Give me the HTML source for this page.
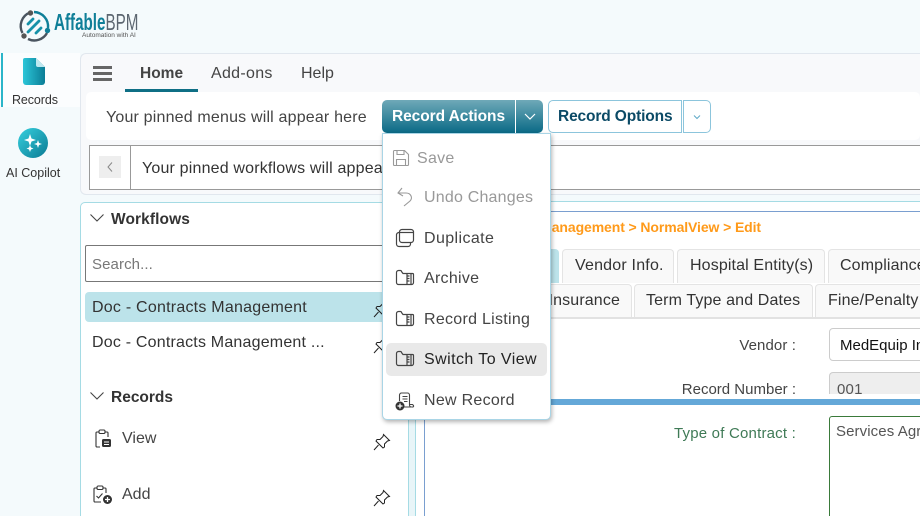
<!DOCTYPE html>
<html><head><meta charset="utf-8"><style>
html,body{margin:0;padding:0;width:920px;height:516px;overflow:hidden;background:#f4fafc;font-family:"Liberation Sans",sans-serif;color:#222}
#w{position:relative;width:920px;height:516px;overflow:hidden}
.a{position:absolute;box-sizing:border-box}
.t{position:absolute;white-space:nowrap;font-size:16px;line-height:20px}
.b{font-size:15.5px;font-weight:bold}
svg{position:absolute;overflow:visible}
.m{color:#444;font-size:16px;letter-spacing:.28px}
.d{color:#999}
.lb{position:absolute;right:124px;white-space:nowrap;font-size:15px;line-height:20px;color:#444;letter-spacing:.1px}
.tab{position:absolute;box-sizing:border-box;background:#f9f9f9;border:1px solid #e4e4e4;border-bottom:none;border-radius:4px 4px 0 0;height:34px}
.tab span{position:absolute;white-space:nowrap;font-size:16px;line-height:20px;top:6px;color:#333;letter-spacing:.13px}
</style></head><body><div id="w">
<div class="a" style="left:0;top:53px;width:80px;height:54px;background:#fbfdfe"></div>
<div class="a" style="left:1px;top:53px;width:2px;height:54px;background:#2bb5c9"></div>
<div class="a" style="left:80px;top:53px;width:840px;height:142px;background:#f8f9fb;border:1px solid #e1e7ee;border-right:none;border-radius:6px 0 0 6px"></div>

<!-- logo -->
<svg style="left:18px;top:9px" width="34" height="35" viewBox="0 0 34 35" fill="none">
<path d="M12 3.500A14.500 14.500 0 0 0 4.500 24" stroke="#4a5560" stroke-width="2.400"/>
<path d="M10 30A14.500 14.500 0 0 0 29 24" stroke="#4a5560" stroke-width="2.400"/>
<path d="M16 3A14.500 14.500 0 0 1 30 19" stroke="#0f7f98" stroke-width="2.400"/>
<circle cx="12.500" cy="4" r="2.700" fill="#555"/><circle cx="29.500" cy="21.500" r="2.700" fill="#0f7f98"/><circle cx="6" cy="27" r="2.700" fill="#555"/>
<path d="M10 15l5-5M10 23l11-11M18 24l5-5" stroke="#1591a8" stroke-width="2.800" stroke-linecap="round"/>
</svg>
<div class="t" style="left:54px;top:9px;font-size:23px;line-height:26px;font-weight:bold;color:#0f7f98;transform:scaleX(.66);transform-origin:0 0;letter-spacing:0">Affable<span style="font-weight:normal;color:#5c6670">BPM</span></div>
<div class="t" style="left:82px;top:31px;font-size:6.500px;line-height:10px;color:#555">Automation with AI</div>

<!-- sidebar -->
<svg style="left:23px;top:58px" width="22" height="27" viewBox="0 0 22 27"><defs><linearGradient id="g1" x1="0" x2="1" y1="0" y2="0"><stop offset="0" stop-color="#2cc6d8"/><stop offset="1" stop-color="#0b7d96"/></linearGradient><linearGradient id="g2" x1="0" x2="1" y1="0" y2="1"><stop offset="0" stop-color="#36d0de"/><stop offset="1" stop-color="#0a7a93"/></linearGradient></defs>
<path d="M2 0H13L22 9V24a3 3 0 0 1-3 3H3a3 3 0 0 1-3-3V2a2 2 0 0 1 2-2z" fill="url(#g1)"/><path d="M13 0L22 9H15a2 2 0 0 1-2-2z" fill="#bfe8f0"/></svg>
<div class="t" style="left:12px;top:90px;font-size:12.500px;color:#333;letter-spacing:-.1px">Records</div>
<svg style="left:18px;top:128px" width="30" height="30" viewBox="0 0 30 30"><circle cx="15" cy="15" r="15" fill="url(#g2)"/><path d="M12 6l1.500 4.500L18 12l-4.500 1.500L12 18l-1.500-4.500L6 12l4.500-1.500zM20 12l1 3 3 1-3 1-1 3-1-3-3-1 3-1zM12 17l1 2.500 2.500 1-2.500 1L12 24l-1-2.500-2.500-1 2.500-1z" fill="#fff"/></svg>
<div class="t" style="left:6px;top:163px;font-size:12.500px;color:#333">AI Copilot</div>

<!-- nav -->
<div class="a" style="left:93px;top:66px;width:19px;height:2.500px;background:#666"></div>
<div class="a" style="left:93px;top:72px;width:19px;height:2.500px;background:#666"></div>
<div class="a" style="left:93px;top:78px;width:19px;height:2.500px;background:#666"></div>
<div class="t b" style="left:140px;top:64px;color:#444">Home</div>
<div class="a" style="left:125px;top:89px;width:73px;height:3px;background:#0f6f85"></div>
<div class="t" style="left:211px;top:64px;color:#444;letter-spacing:.3px">Add-ons</div>
<div class="t" style="left:301px;top:64px;color:#444">Help</div>

<!-- pinned menus -->
<div class="a" style="left:86px;top:92px;width:834px;height:48px;background:#fff;border-radius:5px"></div>
<div class="t" style="left:106px;top:108px;color:#444;letter-spacing:.18px">Your pinned menus will appear here</div>
<div class="a" style="left:382px;top:100px;width:133px;height:33px;background:linear-gradient(#6fa9b8,#0a6a86);border-radius:5px 0 0 5px"></div>
<div class="t b" style="left:392px;top:107px;color:#fff;letter-spacing:-.07px">Record Actions</div>
<div class="a" style="left:516px;top:100px;width:27px;height:33px;background:linear-gradient(#6fa9b8,#0a6a86);border-radius:0 5px 5px 0"></div>
<svg style="left:524px;top:113px" width="12" height="8" fill="none"><path d="M1 1l5 5 5-5" stroke="#fff" stroke-width="1.200"/></svg>
<div class="a" style="left:548px;top:100px;width:134px;height:33px;background:#fff;border:1px solid #8cc5dc;border-radius:5px 0 0 5px"></div>
<div class="t b" style="left:558px;top:107px;color:#0b4a66;letter-spacing:-.13px">Record Options</div>
<div class="a" style="left:683px;top:100px;width:28px;height:33px;background:#fff;border:1px solid #8cc5dc;border-radius:0 5px 5px 0"></div>
<svg style="left:693px;top:115px" width="8" height="5" fill="none"><path d="M1 .5l3 3 3-3" stroke="#5fa9c7" stroke-width="1"/></svg>

<!-- pinned workflows -->
<div class="a" style="left:89px;top:145px;width:840px;height:45px;background:#fff;border:1px solid #999"></div>
<div class="a" style="left:130px;top:145px;width:1px;height:45px;background:#999"></div>
<div class="a" style="left:99px;top:156px;width:22px;height:22px;background:#eee"></div>
<svg style="left:107px;top:162px" width="6" height="10" fill="none"><path d="M5 .5L1 5l4 4.500" stroke="#888" stroke-width="1"/></svg>
<div class="t" style="left:142px;top:159px;color:#333;letter-spacing:.18px">Your pinned workflows will appear here</div>

<!-- left panel -->
<div class="a" style="left:80px;top:202px;width:329px;height:330px;background:#fff;border:1px solid #a5dbe4;border-radius:5px"></div>
<svg style="left:90px;top:214px" width="14" height="8" fill="none"><path d="M.5.5L7 7l6.500-6.500" stroke="#444" stroke-width="1.100"/></svg>
<div class="t b" style="left:111px;top:210px;color:#333;letter-spacing:.1px">Workflows</div>
<div class="a" style="left:85px;top:245px;width:320px;height:37px;background:#fff;border:1px solid #777;border-radius:2px"></div>
<div class="t" style="left:92px;top:255px;font-size:15px;color:#777;letter-spacing:.1px">Search...</div>
<div class="a" style="left:85px;top:292px;width:320px;height:30px;background:#bce3ea;border-radius:4px"></div>
<div class="t" style="left:92px;top:298px;color:#333;letter-spacing:.23px">Doc - Contracts Management</div>
<div class="t" style="left:92px;top:333px;color:#333;letter-spacing:.2px">Doc - Contracts Management ...</div>
<svg style="left:90px;top:392px" width="14" height="8" fill="none"><path d="M.5.5L7 7l6.500-6.500" stroke="#444" stroke-width="1.100"/></svg>
<div class="t b" style="left:111px;top:388px;color:#333">Records</div>

<svg style="left:95px;top:429px" width="18" height="20" viewBox="0 0 18 20" fill="none" stroke="#333" stroke-width="1.100"><path d="M4 3H2a1 1 0 0 0-1 1v13a1 1 0 0 0 1 1h3M10 3h2a1 1 0 0 1 1 1v4"/><rect x="4" y="1" width="6" height="3.500" rx="1.200"/><rect x="7" y="10" width="9" height="8" rx="1.500" fill="#333" stroke="none"/><path d="M9 13h5M9 15.500h5" stroke="#fff" stroke-width="1"/></svg>
<div class="t" style="left:122px;top:429px;color:#444">View</div>
<svg style="left:93px;top:485px" width="20" height="20" viewBox="0 0 20 20" fill="none" stroke="#333" stroke-width="1.100"><path d="M4 3H2a1 1 0 0 0-1 1v12a1 1 0 0 0 1 1h6M10 3h2a1 1 0 0 1 1 1v4"/><rect x="4" y="1" width="6" height="3.500" rx="1.200"/><path d="M3.500 11l2 2 4-4.500"/><circle cx="14.500" cy="14.500" r="4.500" fill="#333" stroke="none"/><path d="M12 14.500h5M14.500 12v5" stroke="#fff" stroke-width="1.300"/></svg>
<div class="t" style="left:122px;top:485px;color:#444">Add</div>
<svg style="left:373px;top:300px" width="18" height="18" viewBox="0 0 18 18" fill="none" stroke="#222" stroke-width="1"><path d="M1 17l4.500-5M10.500 1.500l6 6-2 .5-3 3 0 3-1.500 1-7-7 1-1.500h3l3-3z"/></svg>
<svg style="left:373px;top:336px" width="18" height="18" viewBox="0 0 18 18" fill="none" stroke="#222" stroke-width="1"><path d="M1 17l4.500-5M10.500 1.500l6 6-2 .5-3 3 0 3-1.500 1-7-7 1-1.500h3l3-3z"/></svg>
<svg style="left:373px;top:433px" width="18" height="18" viewBox="0 0 18 18" fill="none" stroke="#222" stroke-width="1"><path d="M1 17l4.500-5M10.500 1.500l6 6-2 .5-3 3 0 3-1.500 1-7-7 1-1.500h3l3-3z"/></svg>
<svg style="left:373px;top:489px" width="18" height="18" viewBox="0 0 18 18" fill="none" stroke="#222" stroke-width="1"><path d="M1 17l4.500-5M10.500 1.500l6 6-2 .5-3 3 0 3-1.500 1-7-7 1-1.500h3l3-3z"/></svg>

<!-- right panel -->
<div class="a" style="left:415px;top:201px;width:505px;height:315px;background:#fff;border-left:1px solid #a5dbe4;border-top:1px solid #a5dbe4"></div>
<div class="a" style="left:409px;top:202px;width:6px;height:314px;background:#e8f5f8"></div>
<div class="a" style="left:424px;top:211px;width:496px;height:305px;background:#fff;border-left:1px solid #7a9fd0;border-top:1px solid #7a9fd0"></div>
<div class="t" style="right:159px;top:217px;font-size:14px;font-weight:bold;color:#ff9a1a;letter-spacing:-.1px">Doc - Contracts Management &gt; NormalView &gt; Edit</div>
<div class="a" style="left:440px;top:249px;width:119px;height:34px;background:#bce3ea;border-radius:4px 4px 0 0"></div>
<div class="tab" style="left:562px;top:249px;width:112px"><span style="left:12px;letter-spacing:.2px">Vendor Info.</span></div>
<div class="tab" style="left:677px;top:249px;width:148px"><span style="left:12px">Hospital Entity(s)</span></div>
<div class="tab" style="left:828px;top:249px;width:120px"><span style="left:11px">Compliance</span></div>
<div class="tab" style="left:440px;top:284px;width:192px"><span style="right:11px">Insurance</span></div>
<div class="tab" style="left:634px;top:284px;width:179px"><span style="left:11px">Term Type and Dates</span></div>
<div class="tab" style="left:815px;top:284px;width:120px"><span style="left:12px">Fine/Penalty</span></div>
<div class="a" style="left:425px;top:317px;width:495px;height:2px;background:#e2e2e2"></div>

<div class="lb" style="top:336px">Vendor :</div>
<div class="a" style="left:829px;top:328px;width:110px;height:33px;background:#fff;border:1px solid #ccc;border-radius:4px"></div>
<div class="t" style="left:840px;top:336px;font-size:15px;color:#111;width:80px;overflow:hidden">MedEquip Inc</div>
<div class="lb" style="top:380px;letter-spacing:0">Record Number :</div>
<div class="a" style="left:829px;top:372px;width:110px;height:22px;background:#eee;border:1px solid #ccc;border-bottom:none;border-radius:4px 4px 0 0"></div>
<div class="t" style="left:837px;top:380px;font-size:15px;line-height:20px;color:#555;height:14px;overflow:hidden;letter-spacing:.2px">001</div>
<div class="a" style="left:425px;top:399px;width:495px;height:6px;background:#64a8d8"></div>
<div class="lb" style="top:424px;color:#3f7a56;letter-spacing:.2px">Type of Contract :</div>
<div class="a" style="left:829px;top:416px;width:110px;height:120px;background:#fff;border:1px solid #3a7a3a;border-radius:3px"></div>
<div class="t" style="left:836px;top:422px;font-size:15px;color:#555;letter-spacing:.1px;width:84px;overflow:hidden">Services Agreement</div>

<!-- dropdown -->
<div class="a" style="left:382px;top:133px;width:169px;height:287px;background:#fff;border:1px solid #a9d5e6;border-radius:0 0 5px 5px;box-shadow:1px 2px 4px rgba(0,0,0,.3)"></div>
<div class="a" style="left:386px;top:343px;width:161px;height:33px;background:#e9e9e9;border-radius:5px"></div>

<svg style="left:393px;top:150px" width="16" height="16" viewBox="0 0 16 16" fill="none" stroke="#999" stroke-width="1.100"><path d="M1.500.5h10l4 4v10a1 1 0 0 1-1 1h-13a1 1 0 0 1-1-1v-13a1 1 0 0 1 1-1z"/><path d="M4 .5v4h7v-4M3.500 15.500v-6h9v6"/></svg>
<div class="t m d" style="left:417px;top:149px">Save</div>
<svg style="left:397px;top:187px" width="17" height="20" viewBox="0 0 17 20" fill="none" stroke="#999" stroke-width="1.100"><path d="M5 1L1 6l5 3M1 6h8c5 0 7 5 4 8l-6 5"/></svg>
<div class="t m d" style="left:424px;top:188px;letter-spacing:.2px">Undo Changes</div>
<svg style="left:396px;top:229px" width="18" height="18" viewBox="0 0 18 18" fill="none" stroke="#444" stroke-width="1.200"><rect x="3.500" y=".5" width="14" height="13" rx="2.500"/><path d="M3.500 3.500H3A2.500 2.500 0 0 0 .5 6v9A2.500 2.500 0 0 0 3 17.500h9a2.500 2.500 0 0 0 2.500-2.500v-1.500"/><path d="M3.500 3.500h14"/></svg>
<div class="t m" style="left:424px;top:229px;letter-spacing:.4px">Duplicate</div>

<svg style="left:396px;top:270px" width="18" height="15" viewBox="0 0 18 15" fill="none" stroke="#444" stroke-width="1.200"><path d="M.5 3v9.500a2 2 0 0 0 2 2h13a2 2 0 0 0 2-2v-8a1 1 0 0 0-1-1H7l-1.500-2a1 1 0 0 0-1-1H2.500a2 2 0 0 0-2 2z"/><path d="M11 3.500v11M15 3.500v11M11 6h2.500M13.500 8.500H11M11 11h2.500"/></svg>
<div class="t m" style="left:424px;top:269px">Archive</div>
<svg style="left:396px;top:311px" width="18" height="15" viewBox="0 0 18 15" fill="none" stroke="#444" stroke-width="1.200"><path d="M.5 3v9.500a2 2 0 0 0 2 2h13a2 2 0 0 0 2-2v-8a1 1 0 0 0-1-1H7l-1.500-2a1 1 0 0 0-1-1H2.500a2 2 0 0 0-2 2z"/><path d="M11 3.500v11M15 3.500v11M11 6h2.500M13.500 8.500H11M11 11h2.500"/></svg>
<div class="t m" style="left:424px;top:310px">Record Listing</div>
<svg style="left:396px;top:351px" width="18" height="15" viewBox="0 0 18 15" fill="none" stroke="#444" stroke-width="1.200"><path d="M.5 3v9.500a2 2 0 0 0 2 2h13a2 2 0 0 0 2-2v-8a1 1 0 0 0-1-1H7l-1.500-2a1 1 0 0 0-1-1H2.500a2 2 0 0 0-2 2z"/><path d="M11 3.500v11M15 3.500v11M11 6h2.500M13.500 8.500H11M11 11h2.500"/></svg>
<div class="t m" style="left:424px;top:350px;color:#222;letter-spacing:.43px">Switch To View</div>
<svg style="left:395px;top:392px" width="20" height="19" viewBox="0 0 20 19" fill="none" stroke="#444" stroke-width="1.100"><path d="M4.500 9V3a2 2 0 0 1 2-2h6a2 2 0 0 1 2 2v10a2 2 0 0 0 2 2h1a1 1 0 0 0 1-1.500l-1-1h-3M8 15h8"/><path d="M7.500 4.500h5M7.500 7h5M9 9.500h3.500"/><circle cx="5" cy="14" r="4.500" fill="#333" stroke="none"/><path d="M2.500 14h5M5 11.500v5" stroke="#fff" stroke-width="1.300"/></svg>
<div class="t m" style="left:424px;top:391px">New Record</div>
</div></body></html>
